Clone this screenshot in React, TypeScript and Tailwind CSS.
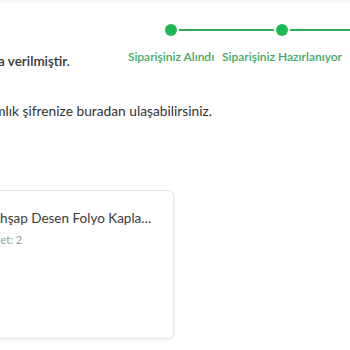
import React from "react";

const steps = [
  { label: "Siparişiniz Alındı", w: "w-[94px]", first: true },
  { label: "Siparişiniz Hazırlanıyor", w: "w-[128px]", first: false },
  { label: "Kargoya Verildi", w: "w-[90px]", first: false },
];

function Stepper() {
  return (
    <div className="flex shrink-0 ml-[54px]">
      {steps.map((s) => (
        <div key={s.label} className={`${s.w} flex flex-col items-center shrink-0`}>
          <div className="flex items-center w-full">
            <div className={`flex-1 h-[2px] ${s.first ? "bg-transparent" : "bg-[#2eaa5a]"}`} />
            <div className="w-[12px] h-[12px] rounded-full bg-[#1db954] mx-[2px] shrink-0" />
            <div className="flex-1 h-[2px] bg-[#2eaa5a]" />
          </div>
          <div className="mt-[13px] text-[12px] leading-[15px] font-semibold text-[#3fa862] whitespace-nowrap">
            {s.label}
          </div>
        </div>
      ))}
    </div>
  );
}

export default function App() {
  return (
    <div
      className="w-[350px] h-[350px] overflow-hidden bg-white text-[#333333]"
      style={{ fontFamily: "Lato, 'Noto Sans', sans-serif" }}
    >
      <div className="h-[3px] bg-[#f7f7f7]" />
      <div className="flex items-start pt-[21px]">
        <div className="w-[70px] shrink-0 overflow-hidden flex justify-end whitespace-nowrap mt-[28px] text-[13.5px] leading-[18px] font-semibold">
          Siparişiniz başarıyla onaya verilmiştir.
        </div>
        <Stepper />
      </div>
      <div className="w-[212px] overflow-hidden flex justify-end whitespace-nowrap mt-[32px] text-[13.75px] leading-[18px]">
        Tek kullanımlık şifrenize buradan ulaşabilirsiniz.
      </div>
      <div className="-ml-[100px] w-[274px] h-[149px] mt-[70px] rounded-md border border-[#e8e8e8] shadow-[0_1px_3px_rgba(0,0,0,0.06)] bg-white pl-[90px] pt-[17px]">
        <div className="w-[164px] truncate text-[13.5px] leading-[20px] text-[#3a3a3a]">
          Ahşap Desen Folyo Kaplama Rulo 45 cm x 10 m
        </div>
        <div className="mt-[5px] -ml-[4px] text-[11px] leading-[14px] text-[#9a9a9a]">Adet: 2</div>
      </div>
    </div>
  );
}
